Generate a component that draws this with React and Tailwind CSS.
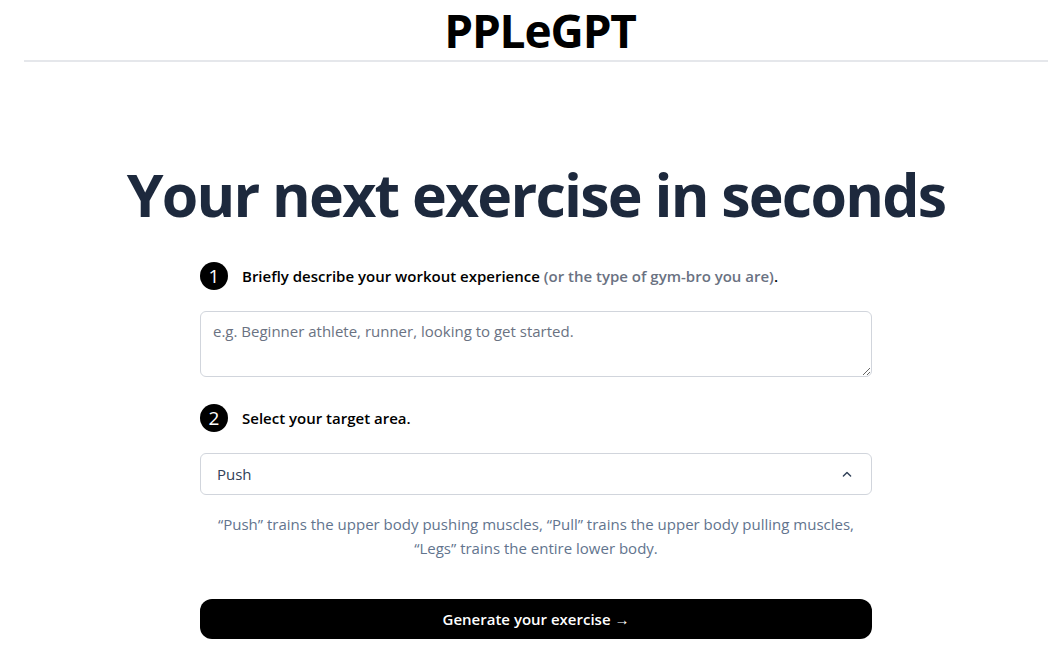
import React, { useState } from "react";

const StepBadge = ({ n }) => (
  <div className="flex h-7 w-7 shrink-0 items-center justify-center rounded-full bg-black text-[19px] leading-none text-white">
    {n}
  </div>
);

const App = () => {
  const [bio, setBio] = useState("");
  const [area, setArea] = useState("Push");

  return (
    <div className="overflow-hidden">
      <div
        className="min-h-screen w-[1072px] bg-white"
        style={{ fontFamily: '"Open Sans", "Noto Sans", sans-serif' }}
      >
        {/* Header */}
        <header className="mx-6 flex justify-center border-b-2 border-gray-200">
          <h1 className="ml-2 text-[46px] font-bold leading-[60px] tracking-tight text-black">PPLeGPT</h1>
        </header>

        <main className="flex flex-col items-center px-4 pt-[96px]">
          <h2 className="text-[59px] font-bold leading-[72px] tracking-[-0.03em] text-slate-800">
            Your next exercise in seconds
          </h2>

          <div className="mt-[32px] w-full max-w-[672px]">
            {/* Step 1 */}
            <div className="flex items-center gap-[14px]">
              <StepBadge n={1} />
              <p className="text-[15px] font-semibold text-black">
                Briefly describe your workout experience{" "}
                <span className="text-gray-500">(or the type of gym-bro you are)</span>.
              </p>
            </div>
            <textarea
              value={bio}
              onChange={(e) => setBio(e.target.value)}
              rows={2}
              placeholder="e.g. Beginner athlete, runner, looking to get started."
              className="mt-[21px] block h-[66px] w-full rounded-md border border-gray-300 px-3 py-2 text-[15px] text-slate-700 placeholder:text-gray-500 focus:outline-none"
            />

            {/* Step 2 */}
            <div className="mt-[27px] flex items-center gap-[14px]">
              <StepBadge n={2} />
              <p className="text-[15px] font-semibold text-black">Select your target area.</p>
            </div>
            <button
              type="button"
              onClick={() => setArea(area)}
              className="mt-[21px] flex h-[42px] w-full items-center justify-between rounded-md border border-gray-300 bg-white px-4 text-[15px] text-slate-700"
            >
              <span>{area}</span>
              <svg className="h-4 w-4 text-slate-700" viewBox="0 0 20 20" fill="none" stroke="currentColor" strokeWidth="1.8">
                <path d="M5.5 12.5L10 8l4.5 4.5" strokeLinecap="round" strokeLinejoin="round" />
              </svg>
            </button>

            <p className="mt-[17px] text-center text-[15px] leading-6 text-slate-500">
              “Push” trains the upper body pushing muscles, “Pull” trains the upper body pulling muscles,
              <br />
              “Legs” trains the entire lower body.
            </p>

            <button
              type="button"
              className="mt-[39px] h-10 w-full rounded-xl bg-black text-[15px] font-semibold text-white"
            >
              Generate your exercise →
            </button>
          </div>
        </main>
      </div>
    </div>
  );
};

export default App;
